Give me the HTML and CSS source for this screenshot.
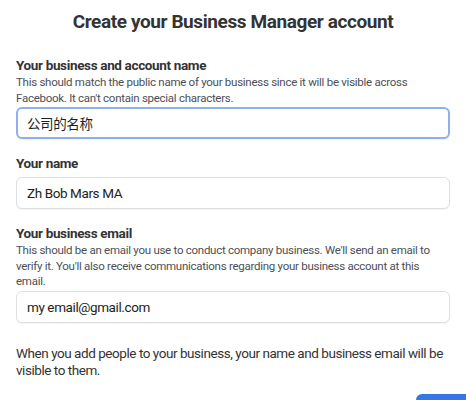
FILE: index.html
```html
<!DOCTYPE html>
<html lang="en">
<head>
    <meta charset="UTF-8">
    <meta name="viewport" content="width=device-width, initial-scale=1.0">
    <title>Create your Business Manager account</title>
    <link rel="stylesheet" href="styles.css">
</head>
<body>
    <div class="dialog">
        <h1>Create your Business Manager account</h1>
        <form class="form">
            <div class="field">
                <label for="bizName">Your business and account name</label>
                <p class="hint">This should match the public name of your business since it will be visible across Facebook. It can't contain special characters.</p>
                <input type="text" id="bizName" class="input focused" value="公司的名称">
            </div>
            <div class="field">
                <label for="yourName">Your name</label>
                <input type="text" id="yourName" class="input" value="Zh Bob Mars MA">
            </div>
            <div class="field">
                <label for="bizEmail">Your business email</label>
                <p class="hint">This should be an email you use to conduct company business. We'll send an email to verify it. You'll also receive communications regarding your business account at this email.</p>
                <input type="email" id="bizEmail" class="input" value="my email@gmail.com">
            </div>
            <p class="note">When you add people to your business, your name and business email will be visible to them.</p>
            <div class="actions">
                <button type="submit" class="submit"></button>
            </div>
        </form>
    </div>
</body>
</html>
```

FILE: styles.css
```css
body {
    font-family: Roboto, "Noto Sans CJK SC", sans-serif;
    background-color: #fff;
    color: #1c1e21;
    margin: 0;
}
.dialog {
    padding: 11px 16px 0 16px;
}
h1 {
    text-align: center;
    font-size: 19px;
    line-height: 22px;
    letter-spacing: -0.4px;
    font-weight: 700;
    color: #333;
    margin: 0 0 24px 0;
}
.field {
    margin-bottom: 16px;
}
label {
    display: block;
    font-size: 13.5px;
    line-height: 16px;
    letter-spacing: -0.35px;
    font-weight: 700;
    color: #333;
}
.hint {
    font-size: 11.5px;
    line-height: 15.5px;
    letter-spacing: -0.27px;
    color: #4b4f56;
    margin: 2px 0 1px 0;
}
label + .input {
    margin-top: 6px;
}
.input {
    display: block;
    width: 100%;
    height: 32px;
    padding: 0 10px;
    font-family: Roboto, "Noto Sans CJK SC", sans-serif;
    font-size: 13.5px;
    letter-spacing: -0.4px;
    color: #1c1e21;
    border: 1px solid #dddfe2;
    border-radius: 6px;
    box-sizing: border-box;
    box-shadow: 0 1px 1px rgba(0, 0, 0, 0.05);
}
.input.focused {
    border: 2px solid #8fb0ec;
    padding: 0 9px;
}
.note {
    font-size: 13.5px;
    line-height: 17px;
    letter-spacing: -0.45px;
    color: #333;
    margin: 22px 0 0 0;
}
.actions {
    display: flex;
    justify-content: flex-end;
    margin-right: -16px;
    margin-top: 15px;
}
.submit {
    width: 50px;
    height: 30px;
    border: none;
    border-radius: 6px 0 0 0;
    background-color: #3578e5;
}
```
